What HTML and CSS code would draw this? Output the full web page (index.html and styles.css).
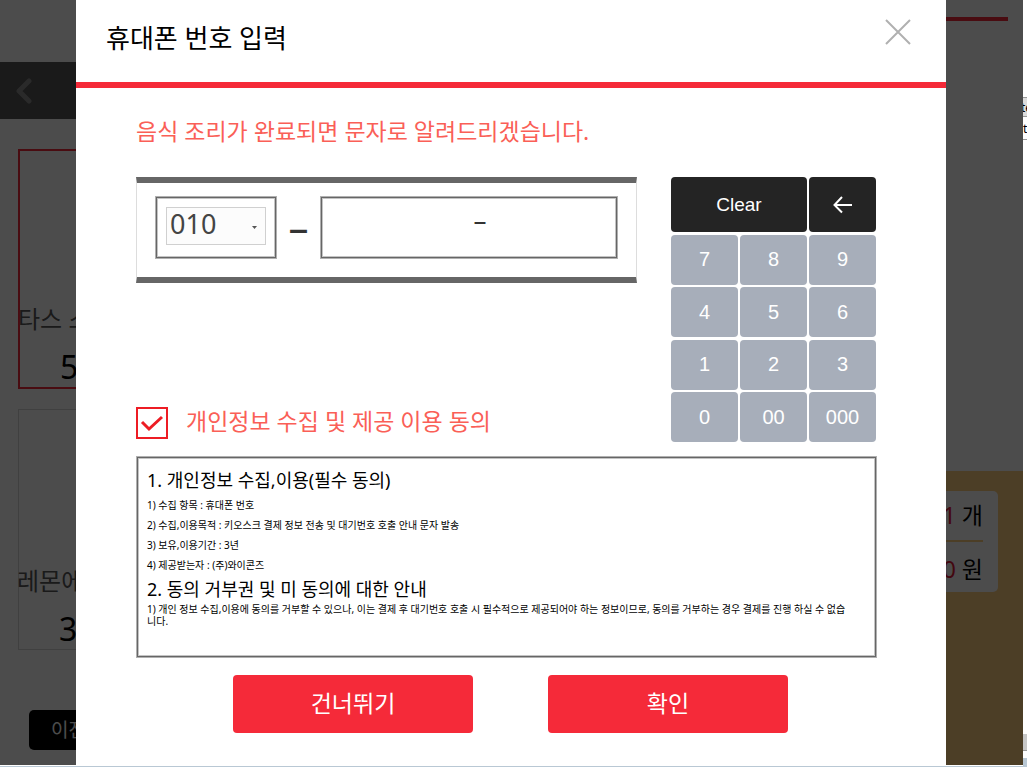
FILE: index.html
```
<!DOCTYPE html>
<html lang="ko">
<head>
<meta charset="utf-8">
<title>휴대폰 번호 입력</title>
<link rel="stylesheet" href="styles.css">
</head>
<body>
<div class="screen">
  <div class="app">
    <div class="kiosk">
      <div class="menu">
        <nav class="menu-nav">
          <svg class="chevron" viewBox="0 0 16 26" aria-hidden="true"><path d="M13 3 L3 13 L13 23"/></svg>
        </nav>
        <div class="products">
          <article class="product selected">
            <p class="product-name">타스 스</p>
            <p class="product-price">5</p>
          </article>
          <article class="product">
            <p class="product-name">레몬에</p>
            <p class="product-price">3</p>
          </article>
        </div>
        <button class="prev" type="button">이전</button>
      </div>
      <aside class="order">
        <div class="order-list"><div class="order-rule"></div></div>
        <div class="order-total">
          <div class="total-card">
            <p class="total-row"><b>1</b> 개</p>
            <p class="total-row"><b>0</b> 원</p>
          </div>
        </div>
      </aside>
    </div>

    <div class="overlay">
      <section class="modal" role="dialog" aria-labelledby="title">
        <header class="modal-head">
          <h1 id="title">휴대폰 번호 입력</h1>
          <button class="close" type="button" aria-label="닫기">
            <svg viewBox="0 0 26 26" aria-hidden="true"><path d="M1 1 L25 25 M25 1 L1 25"/></svg>
          </button>
        </header>
        <div class="modal-body">
          <p class="notice">음식 조리가 완료되면 문자로 알려드리겠습니다.</p>
          <div class="entry">
            <div class="entry-left">
              <div class="phone">
                <div class="prefix framed">
                  <select aria-label="앞자리"><option>010</option></select>
                  <svg class="caret" viewBox="0 0 5 3" aria-hidden="true"><path d="M0 0 H5 L2.5 3 Z"/></svg>
                </div>
                <span class="dash">–</span>
                <input class="number framed" type="text" value="–" aria-label="휴대폰 번호">
              </div>
              <label class="consent">
                <input type="checkbox" checked>
                <svg class="tick" viewBox="0 0 32 32" aria-hidden="true"><path d="M6 15 L13 22 L26 10"/></svg>
                <span>개인정보 수집 및 제공 이용 동의</span>
              </label>
            </div>
            <div class="keypad">
              <button class="key dark wide" type="button">Clear</button>
              <button class="key dark" type="button" aria-label="지우기">
                <svg class="arrow" viewBox="0 0 20 18" aria-hidden="true"><path d="M19 9 H2 M9 1 L1.5 9 L9 16.5"/></svg>
              </button>
              <button class="key" type="button">7</button>
              <button class="key" type="button">8</button>
              <button class="key" type="button">9</button>
              <button class="key" type="button">4</button>
              <button class="key" type="button">5</button>
              <button class="key" type="button">6</button>
              <button class="key" type="button">1</button>
              <button class="key" type="button">2</button>
              <button class="key" type="button">3</button>
              <button class="key" type="button">0</button>
              <button class="key" type="button">00</button>
              <button class="key" type="button">000</button>
            </div>
          </div>
          <div class="terms framed">
            <h2>1. 개인정보 수집,이용(필수 동의)</h2>
            <p class="item">1) 수집 항목 : 휴대폰 번호</p>
            <p class="item">2) 수집,이용목적 : 키오스크 결제 정보 전송 및 대기번호 호출 안내 문자 발송</p>
            <p class="item">3) 보유,이용기간 : 3년</p>
            <p class="item">4) 제공받는자 : (주)와이콘즈</p>
            <h2>2. 동의 거부권 및 미 동의에 대한 안내</h2>
            <p class="detail">1) 개인 정보 수집,이용에 동의를 거부할 수 있으나, 이는 결제 후 대기번호 호출 시 필수적으로 제공되어야 하는 정보이므로, 동의를 거부하는 경우 결제를 진행 하실 수 없습<br>니다.</p>
          </div>
          <div class="actions">
            <button type="button">건너뛰기</button>
            <button type="button">확인</button>
          </div>
        </div>
      </section>
    </div>
  </div>
  <div class="side">
    <div class="side-top"></div>
    <div class="side-tab">te</div>
    <div class="side-field">t</div>
    <div class="side-fill"></div>
    <div class="side-scroll"></div>
    <div class="side-foot"></div>
  </div>
</div>
</body>
</html>
```
FILE: styles.css
```
* { box-sizing: border-box; }

body, h1, h2, p { margin: 0; font-weight: normal; }

body {
  background: #fff;
  color: #000;
  font-family: "Noto Sans", "Noto Sans CJK KR", sans-serif;
}

button, input, select { font-family: inherit; margin: 0; padding: 0; border: 0; }

.screen {
  display: flex;
  min-height: 100vh;
  border-bottom: 1px solid #b9c8d4;
  overflow: hidden;
}

.app {
  position: relative;
  flex: 1;
  min-width: 0;
  margin-bottom: 1px;
}

/* Kiosk page under the dialog */
.kiosk {
  display: flex;
  justify-content: space-between;
  height: 100%;
}

.menu { width: 240px; padding-top: 62px; }

.menu-nav {
  display: flex;
  align-items: center;
  height: 57px;
  padding-left: 16px;
  background: #575757;
}

.chevron { width: 16px; height: 26px; fill: none; stroke: #8c8c8c; stroke-width: 5; stroke-linecap: round; stroke-linejoin: round; }

.products {
  display: flex;
  flex-direction: column;
  gap: 20px;
  padding: 30px 0 60px 18px;
}

.product {
  display: flex;
  flex-direction: column;
  justify-content: flex-end;
  height: 241px;
  border: 1px solid #d8d8d8;
}

.product.selected { height: 240px; border: 2px solid #f52a39; }

.product-name { margin-left: -2px; font-size: 24px; line-height: 40px; color: #575757; }

.product-price { padding: 8px 0 0 40px; font-size: 32px; line-height: 40px; }

.prev {
  width: 120px;
  height: 40px;
  margin-left: 29px;
  padding: 0 0 2px 22px;
  border-radius: 5px;
  background: #000;
  color: #fff;
  font-size: 19px;
  text-align: left;
}

.order { display: flex; flex-direction: column; width: 140px; }

.order-list { height: 471px; padding: 17px 15px 0 0; }

.order-rule { height: 4px; background: #f52a39; }

.order-total { flex: 1; padding: 20px 25px 0 0; background: #ffcf80; }

.total-card { padding: 0 15px; border-radius: 5px; background: #fff; }

.total-row { font-size: 23px; line-height: 49px; text-align: right; }

.total-row + .total-row { padding-top: 5px; border-top: 2px solid #ffcf80; line-height: 45px; }

.total-row b { color: #e01838; font-weight: normal; }

/* Dialog */
.overlay {
  position: absolute;
  inset: 0;
  display: flex;
  justify-content: center;
  padding-right: 1px;
  background: rgba(0, 0, 0, 0.7);
}

.modal { width: 870px; background: #fff; }

.modal-head {
  display: flex;
  align-items: center;
  justify-content: space-between;
  height: 88px;
  padding: 0 35px 6px 30px;
  border-bottom: 6px solid #f52a39;
}

.modal-head h1 { font-size: 26px; line-height: 40px; }

.close { width: 26px; height: 26px; margin-bottom: 12px; background: none; }

.close svg { display: block; stroke: #b0b0b0; stroke-width: 2; }

.modal-body { padding: 23px 69px 0 60px; }

.notice { font-size: 23px; line-height: 40px; color: #fa5f57; }

.entry {
  display: flex;
  justify-content: space-between;
  height: 265px;
  margin: 26px 1px 15px 0;
}

.entry-left {
  display: flex;
  flex-direction: column;
  justify-content: space-between;
  width: 501px;
  padding-bottom: 3px;
}

.framed {
  border: 1px solid #b0b0b0;
  box-shadow: inset 0 0 0 1px #666, inset 0 0 0 2px #c4c4c4;
}

.phone {
  display: flex;
  align-items: center;
  justify-content: space-between;
  height: 106px;
  padding: 0 18px 6px;
  border: 1px solid #ddd;
  border-top: 6px solid #666;
  border-bottom: 6px solid #666;
}

.prefix { position: relative; width: 122px; height: 63px; padding: 10px; }

.prefix select {
  width: 100px;
  height: 38px;
  padding: 0 0 4px 3px;
  appearance: none;
  border: 1px solid #d0d0d0;
  border-radius: 0;
  background: #fcfcfc;
  color: #444;
  font-size: 27px;
  line-height: 32px;
}

.caret { position: absolute; right: 19px; top: 29px; width: 5px; height: 3px; fill: #555; }

.dash { color: #333; font-size: 40px; line-height: 40px; }

.number {
  width: 298px;
  height: 63px;
  padding: 0 0 14px 22px;
  background: #fff;
  color: #333;
  font-size: 26px;
  text-align: center;
}

.consent {
  position: relative;
  display: flex;
  align-items: center;
  gap: 18px;
  height: 32px;
  font-size: 23px;
  line-height: 32px;
  color: #fa5f57;
}

.consent span { padding-bottom: 4px; }

.consent input {
  width: 32px;
  height: 32px;
  appearance: none;
  border: 2px solid #ed1c24;
}

.tick { position: absolute; left: 0; top: 0; width: 32px; height: 32px; fill: none; stroke: #ed1c24; stroke-width: 3; }

.keypad {
  display: grid;
  grid-template-columns: repeat(3, 67px);
  grid-template-rows: 55px repeat(4, 50px);
  column-gap: 2px;
  align-content: space-between;
}

.key {
  display: flex;
  align-items: center;
  justify-content: center;
  border-radius: 4px;
  background: #a7aeba;
  color: #fff;
  font-family: "Liberation Sans", Arial, sans-serif;
  font-size: 20px;
}

.key.dark { background: #242424; }

.key.wide { grid-column: span 2; font-size: 19px; }

.arrow { width: 20px; height: 18px; fill: none; stroke: #fff; stroke-width: 2; }

.terms { height: 202px; margin-top: -1px; padding: 10px; }

.terms h2 { font-size: 18px; line-height: 26px; }

.terms .item { font-size: 10px; line-height: 20px; }

.terms .item:nth-of-type(1) { padding-top: 2px; }

.terms .item + h2 { line-height: 28px; }

.terms .detail { font-size: 10px; line-height: 12px; white-space: nowrap; }

.actions { display: flex; justify-content: center; gap: 75px; margin-top: 17px; padding-left: 8px; }

.actions button {
  width: 240px;
  height: 58px;
  padding-bottom: 4px;
  border-radius: 4px;
  background: #f52a39;
  color: #fff;
  font-size: 23px;
}

/* Edge of the neighbouring panel */
.side {
  display: flex;
  flex-direction: column;
  width: 4px;
  overflow: hidden;
  font-size: 12px;
  line-height: 20px;
  text-indent: -2px;
}

.side-top { height: 97px; }

.side-tab { height: 20px; border-top: 1px solid #999; border-bottom: 1px solid #999; background: #ddd; }

.side-field { height: 23px; border-bottom: 1px solid #999; line-height: 24px; text-indent: 0; }

.side-fill { flex: 1; }

.side-scroll { height: 16px; background: #c8c8c8; }

.side-foot { height: 16px; border-top: 1px solid #999; border-bottom: 8px solid #b9c8d4; }
```
